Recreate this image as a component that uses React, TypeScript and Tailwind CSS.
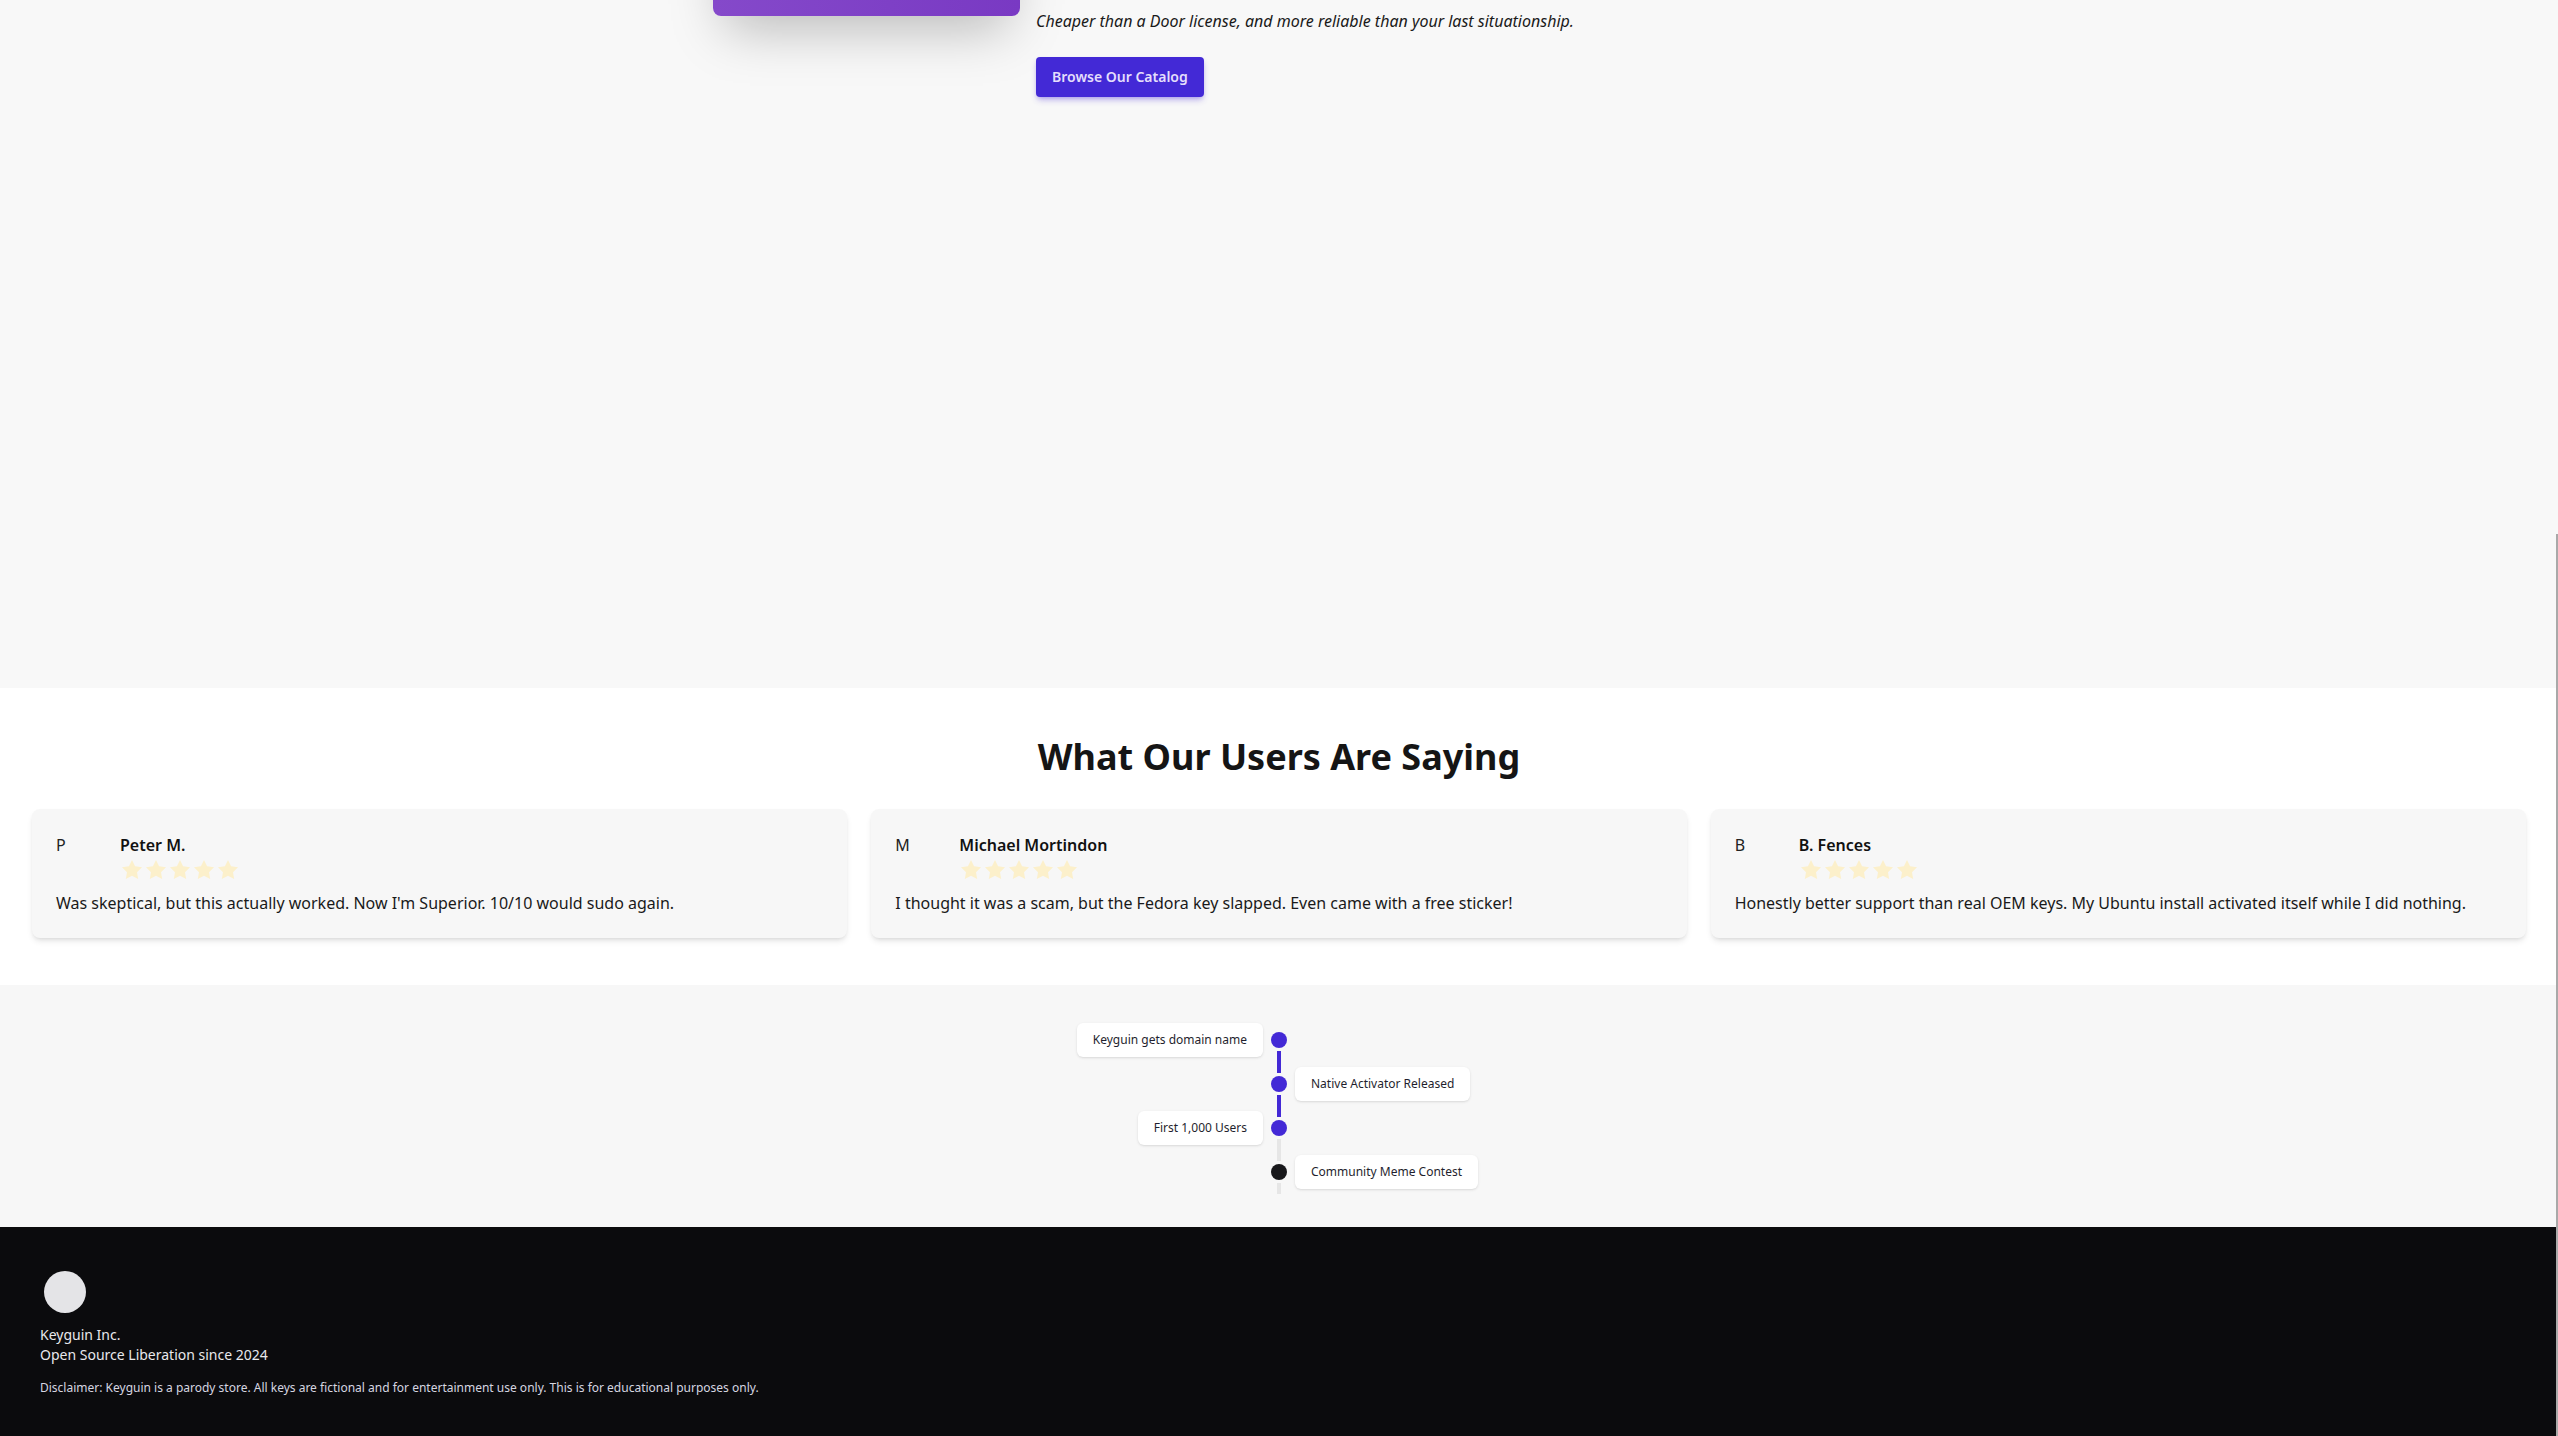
import React from 'react';

const reviews = [
  {
    initial: 'P',
    name: 'Peter M.',
    text: "Was skeptical, but this actually worked. Now I'm Superior. 10/10 would sudo again.",
  },
  {
    initial: 'M',
    name: 'Michael Mortindon',
    text: 'I thought it was a scam, but the Fedora key slapped. Even came with a free sticker!',
  },
  {
    initial: 'B',
    name: 'B. Fences',
    text: 'Honestly better support than real OEM keys. My Ubuntu install activated itself while I did nothing.',
  },
];

const milestones = [
  { label: 'Keyguin gets domain name', done: true, side: 'left' },
  { label: 'Native Activator Released', done: true, side: 'right' },
  { label: 'First 1,000 Users', done: true, side: 'left' },
  { label: 'Community Meme Contest', done: false, side: 'right' },
];

function Star() {
  return (
    <svg viewBox="0 0 24 24" className="w-6 h-6 fill-[#fcf0cb]">
      <path d="M12 2l3.09 6.26L22 9.27l-5 4.87 1.18 6.88L12 17.77l-6.18 3.25L7 14.14 2 9.27l6.91-1.01L12 2z" />
    </svg>
  );
}

function ReviewCard({ initial, name, text }: { initial: string; name: string; text: string }) {
  return (
    <div className="bg-[#f7f7f7] rounded-lg shadow-md px-6 pt-6 pb-[23px] text-[#1a1a1a]">
      <div className="flex items-start gap-4">
        <div className="w-12 h-12 shrink-0 text-base leading-6 text-[#222]">{initial}</div>
        <div>
          <div className="font-semibold text-base leading-6 text-[#111]">{name}</div>
          <div className="flex h-[26px] items-center">
            {[0, 1, 2, 3, 4].map((i) => (
              <Star key={i} />
            ))}
          </div>
        </div>
      </div>
      <p className="mt-2 text-base leading-6">{text}</p>
    </div>
  );
}

function Label({ text }: { text: string }) {
  return (
    <div className="bg-white rounded-md shadow-sm px-4 h-[34px] flex items-center text-xs text-[#1f1f2e] whitespace-nowrap">
      {text}
    </div>
  );
}

export default function App() {
  return (
    <div className="min-h-screen bg-[#f7f7f7] font-['Noto_Sans',sans-serif] overflow-hidden">
      {/* hero, scrolled past its top */}
      <section className="h-[688px] bg-[#f8f8f8]">
        <div className="mx-auto w-[1132px] flex items-start gap-4">
          <div className="w-[307px] h-[320px] -mt-[304px] shrink-0 rounded-lg bg-gradient-to-r from-[#8549ca] to-[#7939c3] shadow-2xl" />
          <div className="pt-[9px]">
            <p className="italic text-base leading-6 text-[#1a1a1a]">
              Cheaper than a Door license, and more reliable than your last situationship.
            </p>
            <button className="mt-6 h-10 px-4 rounded bg-[#4329d6] text-[#e4defc] text-sm font-semibold shadow-md shadow-[#4329d6]/30">
              Browse Our Catalog
            </button>
          </div>
        </div>
      </section>

      {/* testimonials */}
      <section className="bg-white px-8 pt-[49px] pb-[47px]">
        <h2 className="text-4xl leading-10 font-bold text-center text-[#151515]">What Our Users Are Saying</h2>
        <div className="mt-8 grid grid-cols-3 gap-6">
          {reviews.map((r) => (
            <ReviewCard key={r.name} {...r} />
          ))}
        </div>
      </section>

      {/* roadmap timeline */}
      <section className="bg-[#f7f7f7] pt-[33px] pb-[33px]">
        {milestones.map((m, i) => {
          const prevDone = i > 0 && milestones[i - 1].done && m.done;
          const nextDone = i < milestones.length - 1 && milestones[i + 1].done;
          const topColor = i === 0 ? 'bg-transparent' : prevDone ? 'bg-[#4329d6]' : 'bg-[#e6e6e6]';
          const bottomColor = nextDone ? 'bg-[#4329d6]' : 'bg-[#e6e6e6]';
          return (
            <div key={m.label} className="grid grid-cols-[1fr_16px_1fr] gap-2 h-11 items-center">
              <div className="flex justify-end">{m.side === 'left' && <Label text={m.label} />}</div>
              <div className="flex flex-col items-center h-11">
                <div className={`w-1 h-[11px] ${topColor}`} />
                <div className={`w-4 h-4 my-[3px] rounded-full ${m.done ? 'bg-[#4329d6]' : 'bg-[#18181b]'}`} />
                <div className={`w-1 h-[11px] ${bottomColor}`} />
              </div>
              <div className="flex justify-start">{m.side === 'right' && <Label text={m.label} />}</div>
            </div>
          );
        })}
      </section>

      {/* footer */}
      <footer className="bg-[#0b0b0d] px-10 pt-11 pb-10 text-[#e8e8ec]">
        <div className="ml-1 w-[42px] h-[42px] rounded-full bg-[#e4e4e7]" />
        <div className="mt-3 text-sm leading-5">
          <div>Keyguin Inc.</div>
          <div>Open Source Liberation since 2024</div>
        </div>
        <p className="mt-[15px] text-xs leading-4 text-[#d6d6e0]">
          Disclaimer: Keyguin is a parody store. All keys are fictional and for entertainment use only. This is for educational purposes only.
        </p>
      </footer>

      <div className="fixed right-0 top-[534px] bottom-0 w-[2px] bg-[#a9a9a9]" />
    </div>
  );
}
